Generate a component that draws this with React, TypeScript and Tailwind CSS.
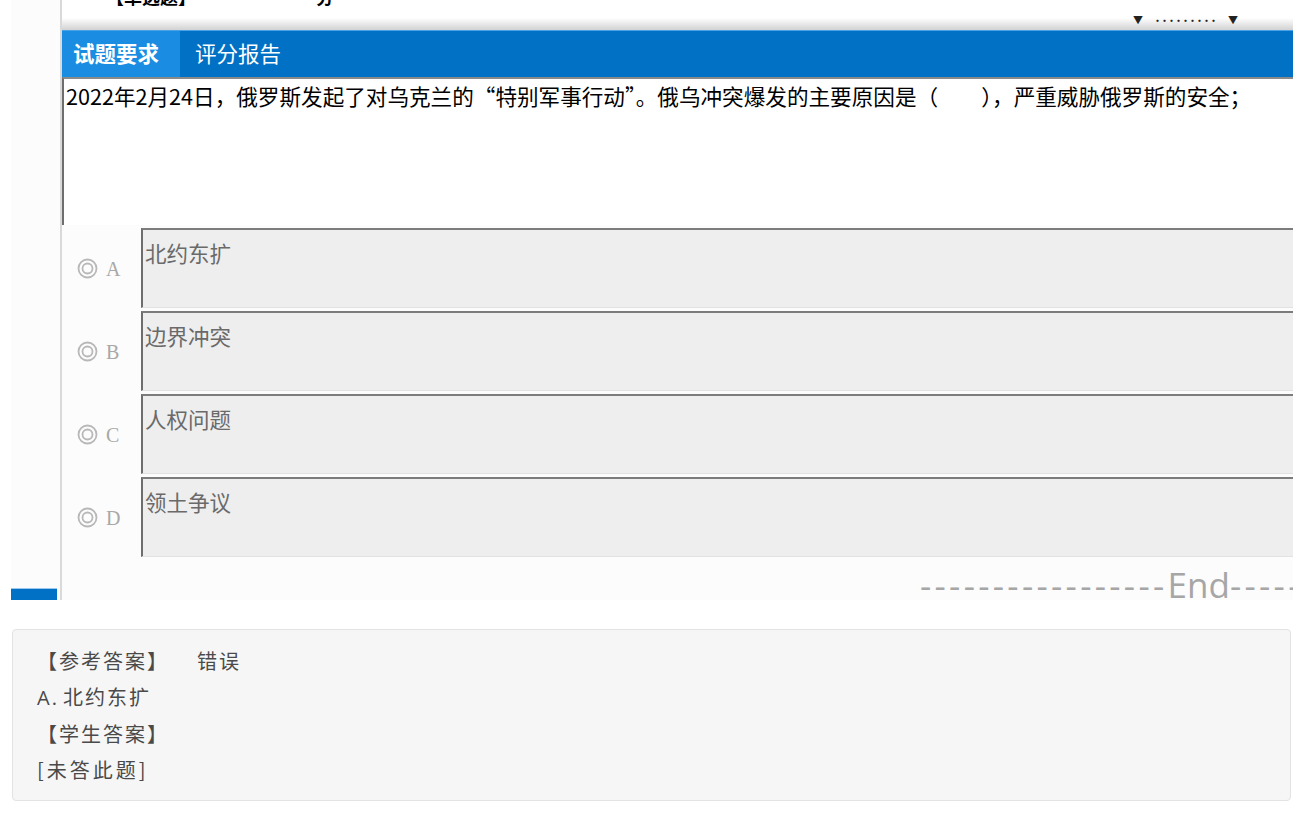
import React from "react"

type Option = {
  key: string
  text: string
}

const options: Option[] = [
  { key: "A", text: "北约东扩" },
  { key: "B", text: "边界冲突" },
  { key: "C", text: "人权问题" },
  { key: "D", text: "领土争议" },
]

const cjk = { fontFamily: '"Noto Sans CJK SC", "Noto Sans", sans-serif' }

function Radio() {
  return (
    <svg width="21" height="21" viewBox="0 0 21 21" className="shrink-0">
      <circle cx="10.5" cy="10.5" r="9" fill="none" stroke="#b8b8b8" strokeWidth="1.8" />
      <circle cx="10.5" cy="10.5" r="5" fill="none" stroke="#b8b8b8" strokeWidth="1.8" />
    </svg>
  )
}

function OptionRow({ opt }: { opt: Option }) {
  return (
    <div className="flex h-[83px] shrink-0 items-stretch">
      <div className="flex w-[79px] shrink-0 items-center pl-[15px] pt-[4px]">
        <Radio />
        <span
          className="ml-[8px] text-[20px] leading-none text-[#a8a8a8]"
          style={{ fontFamily: '"Liberation Serif", serif' }}
        >
          {opt.key}
        </span>
      </div>
      <div className="mt-[3px] h-[80px] flex-1 border-t-[2px] border-l-[2px] border-t-[#7c7c7c] border-l-[#6e6e6e] border-b border-b-[#e2e2e2] bg-[#eeeeee] pl-[2px] pt-[12px]">
        <span className="text-[21.5px] leading-none text-[#6a6a6a]" style={cjk}>
          {opt.text}
        </span>
      </div>
    </div>
  )
}

export default function App() {
  return (
    <div className="w-[1305px] bg-white" style={cjk}>
      {/* 截图区域 */}
      <div className="flex h-[600px] overflow-hidden">
        <div className="w-[11px] shrink-0 bg-white" />
        <div className="flex w-[49px] shrink-0 flex-col justify-end bg-[#fcfcfc]">
          <div className="h-[12px] w-[46px] border-t border-[#9cc8ee] bg-[#0071c5]" />
        </div>
        <div className="w-[2px] shrink-0 bg-[#d9d9d9]" />
        <div className="flex w-[1231px] shrink-0 flex-col overflow-hidden bg-[#fcfcfc]">
          {/* 顶部条 */}
          <div className="relative h-[30px] shrink-0 bg-gradient-to-b from-white from-60% to-[#d2d2d2]">
            <div className="h-[7px] overflow-hidden pl-[44px]">
              <div className="-mt-[17px] text-[18px] font-bold text-black" style={cjk}>
                【单选题】<span className="ml-[120px]">分</span>
              </div>
            </div>
            <div className="absolute left-[1071px] top-[15px] flex items-center text-[10px] leading-none text-[#222]">
              <span>▼</span>
              <span className="ml-[10px] text-[9px] font-bold tracking-[-2px]">•••••••••</span>
              <span className="ml-[12px]">▼</span>
            </div>
          </div>
          {/* 标签栏 */}
          <div className="flex h-[47px] shrink-0 border-t border-[#4aa3e6] bg-[#0071c5]">
            <div className="flex w-[118px] items-center bg-[#1a8de2] pl-[11px] pb-[2px] text-[21.5px] font-bold text-white">
              试题要求
            </div>
            <div className="flex items-center pl-[15px] pb-[2px] text-[21.5px] text-white">
              评分报告
            </div>
          </div>
          {/* 题干 */}
          <div className="h-[148px] shrink-0 border-t-[2px] border-l-[2px] border-t-[#8a8a8a] border-l-[#6e6e6e] bg-white pl-[2px] pt-[3px]">
            <p className="text-[21.6px] leading-[28px] text-black">
              2022年2月24日，俄罗斯发起了对乌克兰的“特别军事行动”。俄乌冲突爆发的主要原因是（　　），严重威胁俄罗斯的安全；
            </p>
          </div>
          {/* 选项 */}
          <div className="flex shrink-0 flex-col">
            {options.map((opt) => (
              <OptionRow key={opt.key} opt={opt} />
            ))}
          </div>
          <div className="shrink-0 overflow-hidden whitespace-nowrap pl-[858px]">
            <span
              className="mt-[8px] block text-[35px] leading-[40px] text-[#a6a6a6]"
              style={{ fontFamily: '"Open Sans", sans-serif' }}
            >
              <span className="tracking-[3.3px]">-----------------</span>End
              <span className="tracking-[3.3px]">-----</span>
            </span>
          </div>
        </div>
        <div className="flex-1 bg-white" />
      </div>

      {/* 答案区域 */}
      <div className="px-[12px] pt-[29px] pb-[13px]">
        <div className="h-[172px] w-[1279px] rounded-[4px] border border-[#e3e3e3] bg-[#f6f6f6] pl-[24px] pt-[13px] text-[20px] leading-[36px] tracking-[2px] text-[#4a4a4a]">
          <div>
            【参考答案】<span className="ml-[28px]">错误</span>
          </div>
          <div>
            <span style={{ fontFamily: '"Open Sans", sans-serif' }}>A.</span>
            <span className="ml-[4px]">北约东扩</span>
          </div>
          <div>【学生答案】</div>
          <div className="tracking-[3px]">[未答此题]</div>
        </div>
      </div>
    </div>
  )
}
